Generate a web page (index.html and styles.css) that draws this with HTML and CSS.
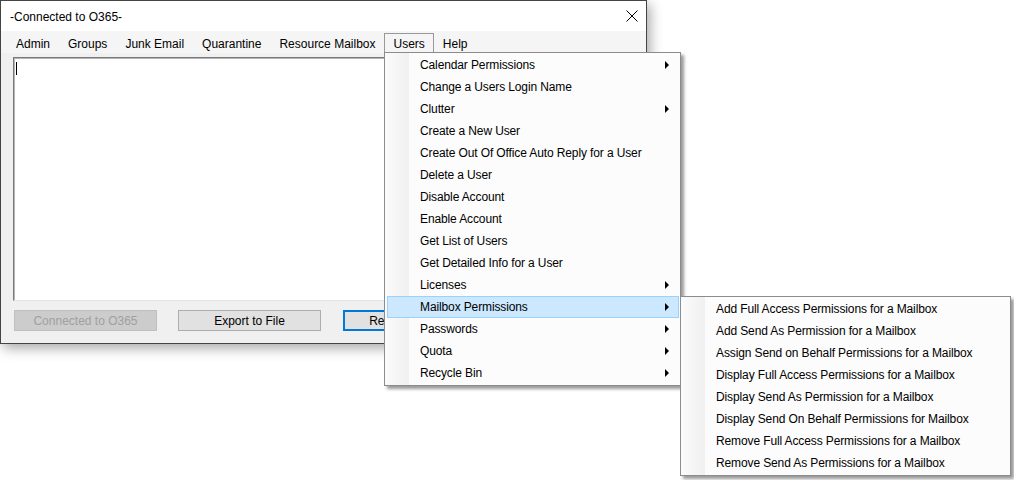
FILE: index.html
```html
<!DOCTYPE html>
<html>
<head>
<meta charset="utf-8">
<link rel="stylesheet" href="styles.css">
</head>
<body>
<div class="desktop">
  <div class="window">
    <div class="titlebar">
      <span class="title">-Connected to O365-</span>
      <svg class="close" width="12" height="12" viewBox="0 0 12 12"><path d="M0.5 0.5 L11.5 11.5 M11.5 0.5 L0.5 11.5" stroke="#000" stroke-width="1" fill="none"/></svg>
    </div>
    <div class="menubar">
      <span class="mb-item">Admin</span>
      <span class="mb-item">Groups</span>
      <span class="mb-item">Junk Email</span>
      <span class="mb-item">Quarantine</span>
      <span class="mb-item">Resource Mailbox</span>
      <span class="mb-item open">Users</span>
      <span class="mb-item">Help</span>
    </div>
    <div class="client">
      <div class="textbox"><span class="caret"></span></div>
      <div class="buttons">
        <span class="btn disabled">Connected to O365</span>
        <span class="btn">Export to File</span>
        <span class="btn focused">Remove Session</span>
      </div>
    </div>
  </div>

  <div class="menu users-menu">
    <div class="mi sub">Calendar Permissions</div>
    <div class="mi">Change a Users Login Name</div>
    <div class="mi sub">Clutter</div>
    <div class="mi">Create a New User</div>
    <div class="mi">Create Out Of Office Auto Reply for a User</div>
    <div class="mi">Delete a User</div>
    <div class="mi">Disable Account</div>
    <div class="mi">Enable Account</div>
    <div class="mi">Get List of Users</div>
    <div class="mi">Get Detailed Info for a User</div>
    <div class="mi sub">Licenses</div>
    <div class="mi sub hl">Mailbox Permissions</div>
    <div class="mi sub">Passwords</div>
    <div class="mi sub">Quota</div>
    <div class="mi sub">Recycle Bin</div>
  </div>

  <div class="menu sub-menu">
    <div class="mi">Add Full Access Permissions for a Mailbox</div>
    <div class="mi">Add Send As Permission for a Mailbox</div>
    <div class="mi">Assign Send on Behalf Permissions for a Mailbox</div>
    <div class="mi">Display Full Access Permissions for a Mailbox</div>
    <div class="mi">Display Send As Permission for a Mailbox</div>
    <div class="mi">Display Send On Behalf Permissions for Mailbox</div>
    <div class="mi">Remove Full Access Permissions for a Mailbox</div>
    <div class="mi">Remove Send As Permissions for a Mailbox</div>
  </div>
</div>
</body>
</html>
```

FILE: styles.css
```css
html, body {
  margin: 0;
  padding: 0;
  background: #ffffff;
}

body {
  font-family: "Liberation Sans", Arial, sans-serif;
  font-size: 12px;
  color: #000;
}

.desktop {
  position: relative;
  width: 1014px;
  height: 480px;
  overflow: hidden;
}

.window {
  box-sizing: border-box;
  width: 647px;
  height: 344px;
  border: 1px solid #444;
  background: #f0f0f0;
  box-shadow: 3px 4px 12px rgba(0, 0, 0, 0.35);
  display: flex;
  flex-direction: column;
}

.titlebar {
  height: 30px;
  background: #fff;
  display: flex;
  align-items: center;
  justify-content: space-between;
  padding: 0 8px 0 9px;
}

.title {
  padding-top: 1px;
}

.close {
  display: block;
  width: 12px;
  height: 12px;
}

.menubar {
  height: 22px;
  display: flex;
  align-items: stretch;
  padding: 0 0 0 6px;
  background: #f5f5f5;
}

.mb-item {
  display: flex;
  align-items: center;
  box-sizing: border-box;
  margin-top: 2px;
  padding: 0 8px 0 8px;
  border: 1px solid transparent;
  border-bottom: none;
  white-space: nowrap;
}

.mb-item.open {
  border-color: #999;
  background: #f5f5f5;
}

.client {
  flex: 1;
  display: flex;
  flex-direction: column;
  padding: 4px 12px 0 12px;
}

.textbox {
  box-sizing: border-box;
  height: 244px;
  background: #fff;
  border-style: solid;
  border-width: 1px;
  border-color: #7a7a7a #e3e3e3 #e3e3e3 #7a7a7a;
  box-shadow: inset 1px 1px 0 #b4b4b4;
  padding: 4px 0 0 2px;
}

.caret {
  display: block;
  width: 1px;
  height: 13px;
  background: #000;
}

.buttons {
  display: flex;
  gap: 21px;
  margin-top: 9px;
  padding-left: 1px;
}

.btn {
  box-sizing: border-box;
  width: 143px;
  height: 21px;
  display: flex;
  align-items: center;
  justify-content: center;
  background: #e1e1e1;
  border: 1px solid #adadad;
  white-space: nowrap;
}

.btn.disabled {
  background: #cccccc;
  border-color: #bfbfbf;
  color: #a0a0a0;
}

.btn.focused {
  border: 2px solid #0078d7;
  margin-left: 1px;
}

.menu {
  position: absolute;
  box-sizing: border-box;
  border: 1px solid #8c8c8c;
  padding: 1px 1px 1px 2px;
  letter-spacing: -0.12px;
  background: linear-gradient(to right, #fbfbfb 0px, #f0f0f0 24px, #fcfcfc 24px);
  box-shadow: 3px 3px 3px rgba(0, 0, 0, 0.4);
}

.users-menu {
  left: 384px;
  top: 52px;
  width: 297px;
}

.sub-menu {
  left: 680px;
  top: 296px;
  width: 331px;
}

.mi {
  position: relative;
  box-sizing: border-box;
  height: 22px;
  display: flex;
  align-items: center;
  padding-left: 32px;
  border: 1px solid transparent;
  white-space: nowrap;
}

.mi.sub::after {
  content: "";
  position: absolute;
  right: 9px;
  top: 6px;
  width: 0;
  height: 0;
  border-left: 4px solid #000;
  border-top: 4px solid transparent;
  border-bottom: 4px solid transparent;
}

.mi.hl {
  background: #cce8ff;
  border-color: #99d1ff;
}
```
